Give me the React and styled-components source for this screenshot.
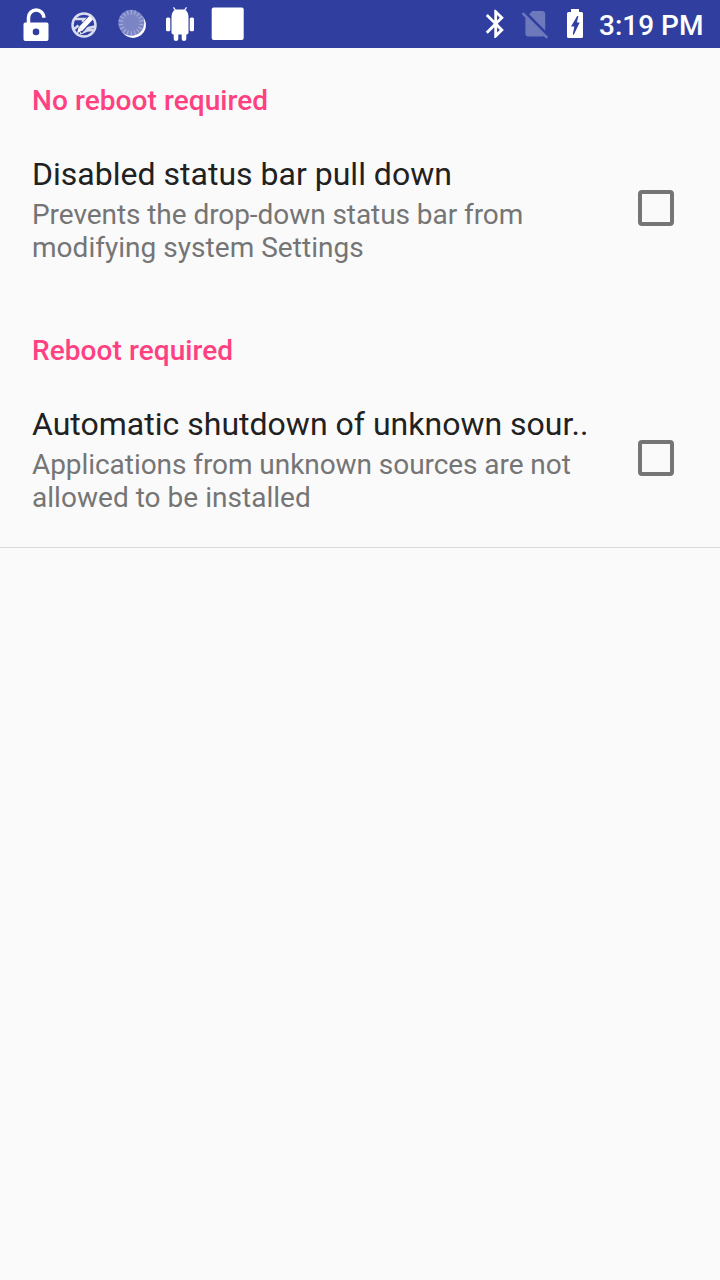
import React from "react";
import styled, { createGlobalStyle } from "styled-components";

const GlobalStyle = createGlobalStyle`
  *{box-sizing:border-box}
  body{margin:0;background:#fafafa;font-family:Roboto,sans-serif}
`;
const Screen = styled.main`min-height:1280px;background:#fafafa;`;
const StatusBar = styled.header`
  height:48px;
  background:#303f9f;
  color:#fff;
  display:flex;
  justify-content:space-between;
  padding:0 17px 0 12px;
`;
const Icons = styled.div`display:flex;align-items:flex-start;`;
const Icon = styled.svg`display:block;width:${p => p.$w || 48}px;height:48px;flex:none;fill:#fff;`;
const Clock = styled.time`font-size:28px;font-weight:500;line-height:52px;white-space:nowrap;width:104px;`;
const Section = styled.section`padding:33px 32px 0;height:250px;`;
const Heading = styled.h2`margin:0;font-size:28px;line-height:40px;font-weight:500;letter-spacing:.08px;color:#ff4081;`;
const Row = styled.div`display:flex;justify-content:space-between;padding-top:33px;`;
const Copy = styled.div`width:560px;`;
const Title = styled.div`font-size:32px;line-height:40px;color:#212121;white-space:nowrap;letter-spacing:.01px;`;
const Summary = styled.div`
  padding-top:4px;
  font-size:28px;
  line-height:33px;
  color:#757575;
  white-space:pre;
  letter-spacing:.03px;
  &::first-line{letter-spacing:-.06px}
`;
const Checkbox = styled.button`
  width:36px;
  height:36px;
  padding:0;
  margin:36px 14px 0 0;
  border:4px solid #757575;
  border-radius:4px;
  background:transparent;
`;
const Divider = styled.hr`height:1px;border:0;margin:-1px 0 0;background:#d8d8d8;`;

const rays = Array.from({ length: 18 }, (_, i) => i * 20);

function Notifications() {
  return (
    <Icons>
      <Icon viewBox="0 0 48 48">
        <path fillRule="evenodd" d="M13.3 22.5h21.4q1.8 0 1.8 1.8v14.9q0 1.8-1.8 1.8H13.3q-1.8 0-1.8-1.8V24.3q0-1.8 1.8-1.8ZM24 28.6a3.3 3.3 0 1 0 0 6.6a3.3 3.3 0 0 0 0-6.6Z" />
        <path d="M16.5 23v-5.3a7.7 7.7 0 0 1 15.4 0" fill="none" stroke="#fff" strokeWidth="3.5" />
      </Icon>
      <Icon viewBox="0 0 48 48">
        <g fill="none" stroke="#d9ddef">
          <path d="M14.500 19h10l-2 3M25 28.800l10-2.300M20 33.500l7-3 6.500-.5M13.500 29.500l5-4" strokeWidth="2.600" />
          <path d="M32 17 19.500 31" stroke="#303f9f" strokeWidth="6.400" />
          <path d="M32 16.800 20.500 29" stroke="#fff" strokeWidth="4.900" />
          <path d="m22.300 30.500-5.300 2.800 1.500-6Z" fill="#fff" stroke="none" />
          <circle cx="24" cy="25" r="11.500" strokeWidth="2.500" />
        </g>
      </Icon>
      <Icon viewBox="0 0 48 48">
        <circle cx="25" cy="25" r="12.9" />
        <circle cx="23.3" cy="22.8" r="13" fill="#7b85c5" />
        <g stroke="#a9b1da" strokeWidth="1">
          {rays.map(a => <path key={a} d="M23.3 10v4.500" transform={`rotate(${a} 23.3 22.8)`} />)}
        </g>
      </Icon>
      <Icon viewBox="0 0 48 48">
        <path d="M15.5 17q0-6 4.500-7.500h8q4.500 1.500 4.500 7.500v15.500q0 2-2 2h-13q-2 0-2-2Z" />
        <rect x="10" y="17.5" width="4.3" height="13.7" rx="1.5" />
        <rect x="33.7" y="17.5" width="4.3" height="13.7" rx="1.5" />
        <path d="M17.7 33h4.600v6q0 2-2.300 2t-2.300-2ZM25.700 33h4.600v6q0 2-2.300 2t-2.300-2Z" />
        <path d="m17.5 7.300 2 3M30.500 7.300l-2 3" stroke="#fff" strokeWidth="1.2" />
      </Icon>
      <Icon viewBox="0 0 48 48">
        <rect x="7.7" y="7.5" width="32" height="32.5" rx="2" />
      </Icon>
    </Icons>
  );
}

function SystemIcons() {
  return (
    <Icons>
      <Icon $w={36} viewBox="0 0 36 48">
        <path transform="translate(.7 6.8) scale(1.4167)" d="M17.710 7.710 12 2h-1v7.590L6.410 5 5 6.410 10.590 12 5 17.590 6.410 19 11 14.410V22h1l5.710-5.710-4.300-4.290 4.300-4.290zM13 5.830l1.880 1.880L13 9.590V5.830zm1.880 10.460L13 18.170v-3.760l1.880 1.880z" />
      </Icon>
      <Icon $w={40} viewBox="0 0 40 48">
        <path fillOpacity=".3" transform="translate(4.3 6.8) scale(1.4167)" d="M18.990 5c0-1.100-.89-2-1.990-2h-7L7.660 5.340 19 16.680 18.990 5zM3.650 3.880 2.380 5.150 5 7.770V19c0 1.100.9 2 2 2h10.010c.35 0 .67-.1.960-.26l1.880 1.880 1.270-1.270L3.650 3.880z" />
      </Icon>
      <Icon $w={45} viewBox="0 0 45 48">
        <path d="M17 9h8v3h2.500q1.500 0 1.500 1.500v23q0 1.500-1.500 1.500h-13q-1.500 0-1.500-1.500v-23q0-1.500 1.500-1.500H17Z" />
        <path fill="#303f9f" d="m23.500 16.500-5.500 9.500h3l-1.700 8.500 5.500-11.500h-2.600l1.500-6.500Z" stroke="#303f9f" strokeWidth="1.1" />
      </Icon>
      <Clock>3:19 PM</Clock>
    </Icons>
  );
}

function Preference({ heading, title, children }) {
  return (
    <Section>
      <Heading>{heading}</Heading>
      <Row>
        <Copy>
          <Title>{title}</Title>
          <Summary>{children}</Summary>
        </Copy>
        <Checkbox role="checkbox" aria-checked="false" aria-label={title} />
      </Row>
    </Section>
  );
}

export default function App() {
  return (
    <Screen>
      <GlobalStyle />
      <StatusBar>
        <Notifications />
        <SystemIcons />
      </StatusBar>
      <Preference heading="No reboot required" title="Disabled status bar pull down">
        {"Prevents the drop-down status bar from\nmodifying system Settings"}
      </Preference>
      <Preference heading="Reboot required" title="Automatic shutdown of unknown sour..">
        {"Applications from unknown sources are not\nallowed to be installed"}
      </Preference>
      <Divider />
    </Screen>
  );
}
